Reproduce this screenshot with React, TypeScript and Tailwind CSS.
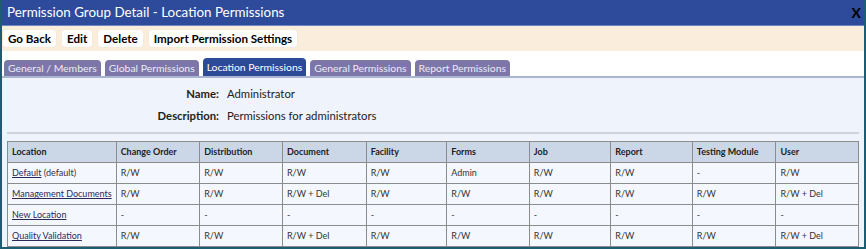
const columns = [
  'Location',
  'Change Order',
  'Distribution',
  'Document',
  'Facility',
  'Forms',
  'Job',
  'Report',
  'Testing Module',
  'User',
]

const widths = ['w-[108px]', 'w-[84px]', 'w-[83px]', 'w-[84px]', 'w-[81px]', 'w-[83px]', 'w-[82px]', 'w-[82px]', 'w-[84px]', 'w-[83px]']

const rows = [
  { name: 'Default', note: ' (default)', values: ['R/W', 'R/W', 'R/W', 'R/W', 'Admin', 'R/W', 'R/W', '-', 'R/W'] },
  { name: 'Management Documents', note: '', values: ['R/W', 'R/W', 'R/W + Del', 'R/W', 'R/W', 'R/W', 'R/W', 'R/W', 'R/W + Del'] },
  { name: 'New Location', note: '', values: ['-', '-', '-', '-', '-', '-', '-', '-', '-'] },
  { name: 'Quality Validation', note: '', values: ['R/W', 'R/W', 'R/W + Del', 'R/W', 'R/W', 'R/W', 'R/W', 'R/W', 'R/W + Del'] },
]

const tabs = ['General / Members', 'Global Permissions', 'Location Permissions', 'General Permissions', 'Report Permissions']

export default function App() {
  return (
    <div className="h-[249px] w-[866px] overflow-hidden bg-[#1d5d74] px-[2px] font-['Lato',sans-serif]">
      <div className="flex h-[247px] flex-col overflow-hidden bg-white">
        {/* Title */}
        <div className="flex h-[26px] shrink-0 items-center justify-between border-b border-[#6f86c0] bg-[#2e4b9b] pl-[5px] pr-[3px]">
          <span className="text-[13.4px] text-white">Permission Group Detail - Location Permissions</span>
          <span className="text-[14px] font-bold text-black">X</span>
        </div>

        {/* Toolbar */}
        <div className="flex h-[25px] shrink-0 items-center gap-[6px] bg-[#faeddc] px-[1px]">
          {['Go Back', 'Edit', 'Delete', 'Import Permission Settings'].map((b) => (
            <button
              key={b}
              className="h-[17px] rounded-[3px] bg-white px-[5px] text-[11.6px] leading-[17px] font-bold text-black shadow-[0_0_1px_rgba(0,0,0,0.15)]"
            >
              {b}
            </button>
          ))}
        </div>

        {/* Tabs */}
        <div className="flex h-[27px] shrink-0 items-end gap-[4px] border-b-2 border-[#aab4d0] px-[2px]">
          {tabs.map((t) => (
            <div
              key={t}
              className={
                t === 'Location Permissions'
                  ? 'h-[18px] rounded-t-[4px] bg-[#2d4a98] px-[4px] text-[10.4px] leading-[18px] text-white'
                  : 'h-[16px] rounded-t-[4px] bg-[#7d76a9] px-[4px] text-[10.4px] leading-[16px] text-[#ecebf4]'
              }
            >
              {t}
            </div>
          ))}
        </div>

        {/* Content */}
        <div className="flex-1 bg-[#eef3fc] px-[5px] pt-[9px]">
          <div className="grid grid-cols-[212px_1fr] gap-x-[8px] gap-y-[8px] text-[11.3px] leading-[14px] text-[#222]">
            <span className="text-right font-bold">Name:</span>
            <span>Administrator</span>
            <span className="text-right font-bold">Description:</span>
            <span>Permissions for administrators</span>
          </div>
          <div className="mt-[9px] mb-[7px] h-[2px] bg-[#cfd3da]" />

          <table className="table-fixed border-collapse text-[9px] text-[#333]">
            <thead>
              <tr className="h-[21px] bg-[#cbd6e7]">
                {columns.map((c, i) => (
                  <th key={c} className={`${widths[i]} border border-[#8c8c8c] px-[4px] text-left font-bold text-[#222]`}>
                    {c}
                  </th>
                ))}
              </tr>
            </thead>
            <tbody>
              {rows.map((r) => (
                <tr key={r.name} className="h-[21px] bg-[#f4f8fe]">
                  <td className="border border-[#8c8c8c] px-[4px] whitespace-nowrap">
                    <span className="text-[#2a2a5a] underline">{r.name}</span>
                    {r.note}
                  </td>
                  {r.values.map((v, i) => (
                    <td key={i} className="border border-[#8c8c8c] px-[4px]">
                      {v}
                    </td>
                  ))}
                </tr>
              ))}
            </tbody>
          </table>
        </div>
      </div>
    </div>
  )
}
